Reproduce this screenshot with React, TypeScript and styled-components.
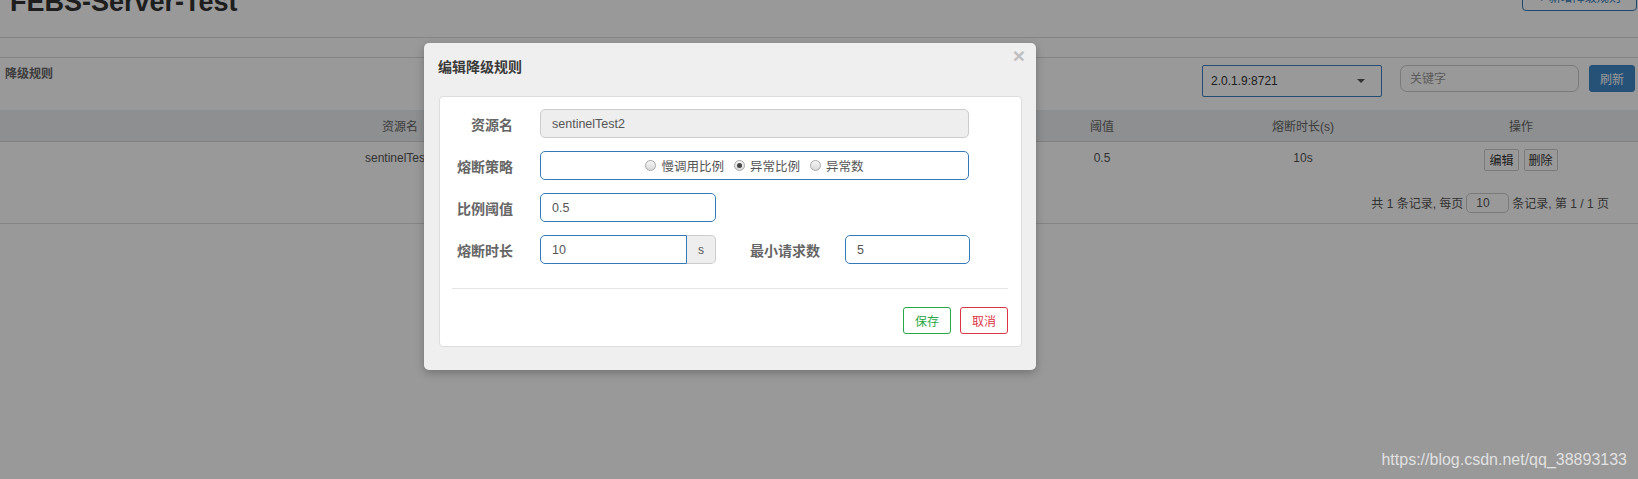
import React from "react";
import styled, { createGlobalStyle } from "styled-components";

const FONT = `"Liberation Sans", "Noto Sans CJK SC", sans-serif`;

const Global = createGlobalStyle`
  html, body { margin: 0; padding: 0; background: #fff; overflow: hidden; }
  body { font-family: ${FONT}; }
  * { box-sizing: border-box; }
`;

const Page = styled.div`
  position: relative;
  width: 1638px;
  height: 479px;
  overflow: hidden;
  background: #fff;
  color: #555;
  font-size: 12px;
  font-family: ${FONT};
`;

const TopBar = styled.header`
  display: flex;
  justify-content: space-between;
  align-items: flex-start;
  height: 38px;
  padding: 0 1px 0 10px;
  border-bottom: 1px solid #ddd;
`;

const SiteTitle = styled.h1`
  margin: -11px 0 0;
  font-size: 27px;
  line-height: 27px;
  font-weight: bold;
  color: #333;
`;

const AddButton = styled.button`
  margin-top: -19px;
  width: 115px;
  height: 30px;
  border: 1px solid #337ab7;
  border-radius: 4px;
  background: #fff;
  color: #337ab7;
  font: 12px ${FONT};
`;

const Panel = styled.section`
  margin-top: 19px;
  border-top: 1px solid #ddd;
`;

const Toolbar = styled.div`
  display: flex;
  justify-content: space-between;
  align-items: flex-start;
  height: 52px;
  padding: 7px 3px 0 5px;
`;

const PanelTitle = styled.span`
  margin-top: 1px;
  font-size: 12px;
  line-height: 16px;
  font-weight: bold;
  color: #666;
`;

const Controls = styled.div`
  display: flex;
  align-items: flex-start;
`;

const FakeSelect = styled.div`
  display: flex;
  align-items: center;
  justify-content: space-between;
  width: 180px;
  height: 32px;
  padding: 0 16px 0 8px;
  border: 1px solid #3f7fc0;
  border-radius: 2px;
  background: #fff;
  color: #333;
  font-size: 12px;
`;

const Caret = styled.span`
  width: 0;
  height: 0;
  border-left: 4px solid transparent;
  border-right: 4px solid transparent;
  border-top: 4px solid #555;
`;

const Keyword = styled.input`
  margin-left: 18px;
  width: 179px;
  height: 27px;
  padding: 0 9px;
  border: 1px solid #ccc;
  border-radius: 7px;
  font: 12px ${FONT};
  color: #555;
  outline: none;
  &::placeholder { color: #999; }
`;

const RefreshButton = styled.button`
  margin-left: 10px;
  width: 46px;
  height: 27px;
  border: 1px solid #3d84c2;
  border-radius: 3px;
  background: #4289c8;
  color: #fff;
  font: 12px ${FONT};
  padding: 0;
`;

const Table = styled.table`
  width: 100%;
  table-layout: fixed;
  border-collapse: collapse;
`;

const Th = styled.th<{ $w?: number }>`
  width: ${(p) => (p.$w ? `${p.$w}px` : "auto")};
  height: 31px;
  padding: 0;
  background: #eceef1;
  border-bottom: 1px solid #d6d6d6;
  font-weight: normal;
  font-size: 12px;
  color: #666;
  text-align: center;
  vertical-align: middle;
`;

const Td = styled.td`
  padding: 8px 0;
  line-height: 16px;
  text-align: center;
  vertical-align: top;
  color: #555;
`;

const RowActions = styled.div`
  display: inline-flex;
  gap: 5px;
  margin-top: -1px;
`;

const SmallButton = styled.button`
  height: 22px;
  padding: 0 4px;
  border: 1px solid #ccc;
  border-radius: 2px;
  background: #fff;
  color: #333;
  font: 12px ${FONT};
`;

const Pager = styled.div`
  display: flex;
  justify-content: flex-end;
  align-items: center;
  padding: 14px 29px 10px 0;
  border-bottom: 1px solid #ddd;
  color: #555;
  font-size: 12px;
`;

const PageSize = styled.input`
  width: 43px;
  height: 20px;
  margin: 0 3px;
  padding: 0 0 0 9px;
  border: 1px solid #ccc;
  border-radius: 5px;
  font: 12px ${FONT};
  color: #555;
`;

const Overlay = styled.div`
  position: absolute;
  inset: 0;
  background: rgba(0, 0, 0, 0.4);
`;

const Dialog = styled.section`
  position: absolute;
  left: 424px;
  top: 43px;
  width: 612px;
  display: flex;
  flex-direction: column;
  background: #efefef;
  border-radius: 5px;
  box-shadow: 0 3px 9px rgba(0, 0, 0, 0.25);
  padding: 0 14px 23px 15px;
`;

const DialogHeader = styled.div`
  display: flex;
  justify-content: space-between;
  align-items: flex-start;
  height: 53px;
  padding: 16px 0 0 0;
`;

const DialogTitle = styled.h4`
  margin: 0 0 0 -1px;
  font-size: 14px;
  line-height: 16px;
  font-weight: bold;
  color: #3a3a3a;
`;

const Close = styled.span`
  margin: -14px -3px 0 0;
  font-size: 21px;
  line-height: 21px;
  font-weight: bold;
  color: #bfbfbf;
`;

const FormCard = styled.div`
  display: flex;
  flex-direction: column;
  background: #fff;
  border: 1px solid #ddd;
  border-radius: 4px;
  padding: 12px 13px 12px 0;
`;

const Fields = styled.div`
  display: flex;
  flex-direction: column;
  gap: 13px;
`;

const Row = styled.div`
  display: flex;
  align-items: center;
  height: 29px;
`;

const Label = styled.label<{ $w: number; $gap: number }>`
  width: ${(p) => p.$w}px;
  margin-right: ${(p) => p.$gap}px;
  text-align: right;
  font-size: 14px;
  font-weight: bold;
  color: #666;
  white-space: nowrap;
`;

const Field = styled.div<{ $w: number; $disabled?: boolean; $center?: boolean }>`
  display: flex;
  align-items: center;
  justify-content: ${(p) => (p.$center ? "center" : "flex-start")};
  width: ${(p) => p.$w}px;
  height: 29px;
  padding: 0 11px;
  border: 1px solid ${(p) => (p.$disabled ? "#ccc" : "#337ab7")};
  border-radius: 5px;
  background: ${(p) => (p.$disabled ? "#eee" : "#fff")};
  color: #555;
  font-size: 12.5px;
`;

const Group = styled.div`
  display: flex;
  width: 176px;
  height: 29px;
`;

const GroupField = styled(Field)`
  border-radius: 5px 0 0 5px;
`;

const Addon = styled.span`
  display: flex;
  align-items: center;
  justify-content: center;
  width: 29px;
  height: 29px;
  border: 1px solid #ccc;
  border-left: none;
  border-radius: 0 5px 5px 0;
  background: #eee;
  color: #555;
  font-size: 12px;
`;

const RadioOption = styled.span`
  display: inline-flex;
  align-items: center;
  margin: 0 5px;
  color: #555;
`;

const RadioDot = styled.span<{ $on?: boolean }>`
  position: relative;
  width: 11px;
  height: 11px;
  margin-right: 5px;
  border: 1px solid #a9a9a9;
  border-radius: 50%;
  background: linear-gradient(#f6f6f6, #d9d9d9);
  &::after {
    content: "";
    display: ${(p) => (p.$on ? "block" : "none")};
    position: absolute;
    left: 2px;
    top: 2px;
    width: 5px;
    height: 5px;
    border-radius: 50%;
    background: #444;
  }
`;

const Divider = styled.hr`
  margin: 24px 0 0 12px;
  border: none;
  border-top: 1px solid #e5e5e5;
`;

const Actions = styled.div`
  display: flex;
  justify-content: flex-end;
  gap: 9px;
  margin-top: 18px;
`;

const OutlineButton = styled.button<{ $tone: string }>`
  height: 27px;
  padding: 0 11px;
  border: 1px solid ${(p) => p.$tone};
  border-radius: 3px;
  background: #fff;
  color: ${(p) => p.$tone};
  font: 12px ${FONT};
`;

const Watermark = styled.span`
  position: absolute;
  right: 11px;
  bottom: 10px;
  font-size: 16px;
  line-height: 18px;
  color: rgba(255, 255, 255, 0.72);
`;

export default function App() {
  return (
    <>
      <Global />
      <Page>
        <TopBar>
          <SiteTitle>FEBS-Server-Test</SiteTitle>
          <AddButton>+ 新增降级规则</AddButton>
        </TopBar>
        <Panel>
          <Toolbar>
            <PanelTitle>降级规则</PanelTitle>
            <Controls>
              <FakeSelect>
                <span>2.0.1.9:8721</span>
                <Caret />
              </FakeSelect>
              <Keyword placeholder="关键字" />
              <RefreshButton>刷新</RefreshButton>
            </Controls>
          </Toolbar>
          <Table>
            <thead>
              <tr>
                <Th $w={800}>资源名</Th>
                <Th $w={202}>降级策略</Th>
                <Th $w={200}>阈值</Th>
                <Th $w={202}>熔断时长(s)</Th>
                <Th>操作</Th>
              </tr>
            </thead>
            <tbody>
              <tr>
                <Td>sentinelTest2</Td>
                <Td>异常比例</Td>
                <Td>0.5</Td>
                <Td>10s</Td>
                <Td>
                  <RowActions>
                    <SmallButton>编辑</SmallButton>
                    <SmallButton>删除</SmallButton>
                  </RowActions>
                </Td>
              </tr>
            </tbody>
          </Table>
          <Pager>
            <span>共 1 条记录, 每页</span>
            <PageSize defaultValue="10" />
            <span>条记录, 第 1 / 1 页</span>
          </Pager>
        </Panel>

        <Overlay />

        <Dialog>
          <DialogHeader>
            <DialogTitle>编辑降级规则</DialogTitle>
            <Close>×</Close>
          </DialogHeader>
          <FormCard>
            <Fields>
              <Row>
                <Label $w={73} $gap={27}>资源名</Label>
                <Field $w={429} $disabled>sentinelTest2</Field>
              </Row>
              <Row>
                <Label $w={73} $gap={27}>熔断策略</Label>
                <Field $w={429} $center>
                  <RadioOption><RadioDot />慢调用比例</RadioOption>
                  <RadioOption><RadioDot $on />异常比例</RadioOption>
                  <RadioOption><RadioDot />异常数</RadioOption>
                </Field>
              </Row>
              <Row>
                <Label $w={73} $gap={27}>比例阈值</Label>
                <Field $w={176}>0.5</Field>
              </Row>
              <Row>
                <Label $w={73} $gap={27}>熔断时长</Label>
                <Group>
                  <GroupField $w={147}>10</GroupField>
                  <Addon>s</Addon>
                </Group>
                <Label $w={104} $gap={25}>最小请求数</Label>
                <Field $w={125}>5</Field>
              </Row>
            </Fields>
            <Divider />
            <Actions>
              <OutlineButton $tone="#28a745">保存</OutlineButton>
              <OutlineButton $tone="#dc3545">取消</OutlineButton>
            </Actions>
          </FormCard>
        </Dialog>

        <Watermark>https://blog.csdn.net/qq_38893133</Watermark>
      </Page>
    </>
  );
}
